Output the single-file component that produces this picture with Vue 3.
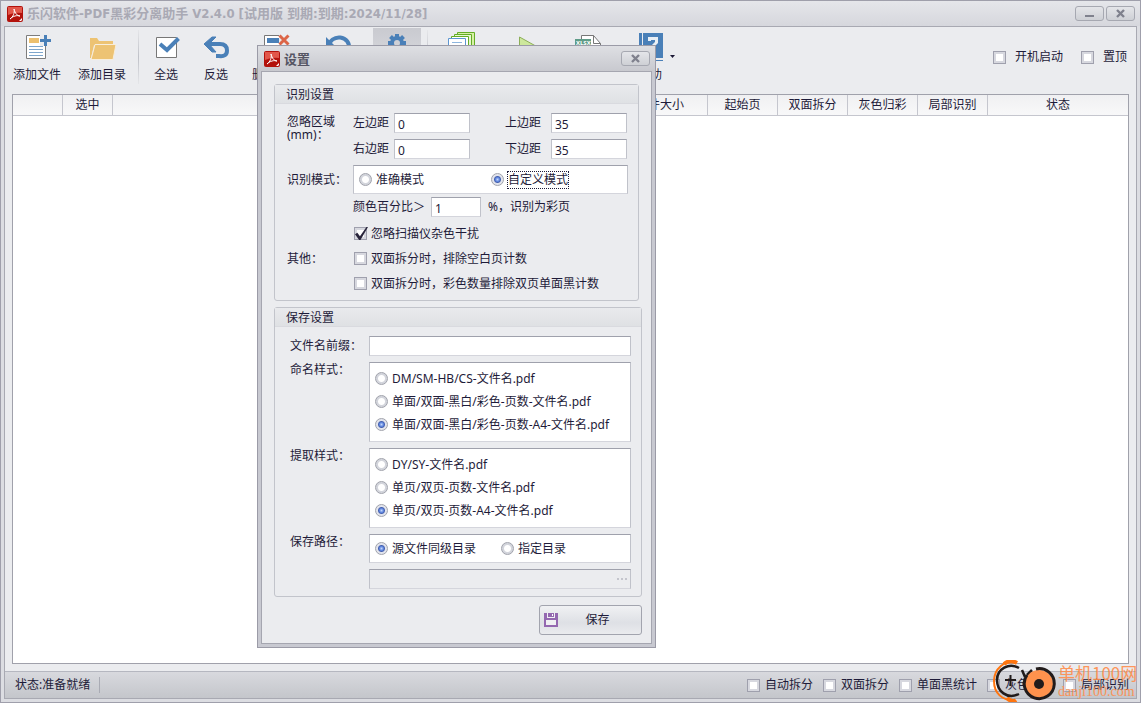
<script setup>
import { ref } from 'vue'

const columns = ['', '选中', '', '文件大小', '起始页', '双面拆分', '灰色归彩', '局部识别', '状态']
const statusOptions = ['自动拆分', '双面拆分', '单面黑统计', '灰色归彩', '局部识别']
const namingStyles = ['DM/SM-HB/CS-文件名.pdf', '单面/双面-黑白/彩色-页数-文件名.pdf', '单面/双面-黑白/彩色-页数-A4-文件名.pdf']
const extractStyles = ['DY/SY-文件名.pdf', '单页/双页-页数-文件名.pdf', '单页/双页-页数-A4-文件名.pdf']

const left = ref('0')
const right = ref('0')
const top = ref('35')
const bottom = ref('35')
const percent = ref('1')
const mode = ref('custom')
const ignoreNoise = ref(true)
const prefix = ref('')
const naming = ref(2)
const extract = ref(2)
const path = ref('same')
</script>

<template>
  <div class="window">
    <header class="titlebar">
      <svg class="logo" viewBox="0 0 16 16" aria-hidden="true">
        <rect width="16" height="16" rx="2" fill="#b3120c" />
        <path d="M1 1h14v6Q8 6 1 9z" fill="#e2574a" />
        <path d="M3 13C6 11 8 7 7 3 8 7 10 10 13 10 10 9 6 10 3 13" fill="none" stroke="#fff" stroke-width="1" />
        <path d="M12 15l3-3v2l-1 1z" fill="#fff" />
      </svg>
      <h1>乐闪软件-PDF黑彩分离助手 V2.4.0 [试用版 到期:到期:2024/11/28]</h1>
      <div class="caption-buttons">
        <button class="caption" aria-label="最小化"><svg viewBox="0 0 11 9"><path d="M1 7h9" stroke="#7f818d" stroke-width="2" /></svg></button>
        <button class="caption" aria-label="关闭"><svg viewBox="0 0 11 9"><path d="M2 1l7 7M9 1L2 8" stroke="#7f818d" stroke-width="2.4" /></svg></button>
      </div>
    </header>

    <div class="client">
      <div class="toolbar">
        <button class="tool wide">
          <svg viewBox="0 0 28 28">
            <path d="M3.500 3.500h19v23h-19z" fill="#fff" stroke="#7d7d7d" />
            <path d="M6 6h10v5H6z" fill="#edc06e" />
            <path d="M6 14.500h14M6 17.500h14M6 20.500h14M6 23.500h14" stroke="#7ea6cc" />
            <path d="M17 3h6v11h-6z" fill="#ebecef" />
            <path d="M17 8.500h11M22.500 3v11" stroke="#4a80b8" stroke-width="3" />
          </svg>
          <span>添加文件</span>
        </button>
        <button class="tool wide">
          <svg viewBox="0 0 28 28">
            <path d="M2 6h7l2 3h14v4H6L3 26H2z" fill="#edc373" />
            <path d="M7 12.500h21l-3 15H3z" fill="#edc373" stroke="#f8eedb" />
          </svg>
          <span>添加目录</span>
        </button>
        <i class="divider"></i>
        <button class="tool">
          <svg viewBox="0 0 28 28">
            <path d="M4.500 5.500h20v20h-20z" fill="#fff" stroke="#777" />
            <path d="M8 12l7 6L26.500 6.500" fill="none" stroke="#4a80b8" stroke-width="4" />
          </svg>
          <span>全选</span>
        </button>
        <button class="tool">
          <svg viewBox="0 0 28 28">
            <path d="M5 12h13q7 0 7 6.500T17 24h-3" fill="none" stroke="#4a80b8" stroke-width="4" />
            <path d="M10 5h4l-7 7 7 8h-4L2 12z" fill="#4a80b8" stroke="#4a80b8" />
          </svg>
          <span>反选</span>
        </button>
        <button class="tool delete">
          <svg viewBox="0 0 28 28">
            <path d="M2.500 3.500h22v20h-22z" fill="#fff" stroke="#777" />
            <path d="M5 6h12v5H5z" fill="#4a80b8" />
            <path d="M17 3h10v11H17z" fill="#ebecef" />
            <path d="M17.500 3.500l9 9M26.500 3.500l-9 9" stroke="#dc6547" stroke-width="3" />
          </svg>
          <span>删除选中</span>
        </button>
        <button class="tool undo" aria-label="撤销">
          <svg viewBox="0 0 28 28">
            <path d="M5 14a10 9 0 1 1 7 9" fill="none" stroke="#4a80b8" stroke-width="4" />
            <path d="M2 5v11h11z" fill="#4a80b8" />
          </svg>
        </button>
        <button class="tool pressed">
          <svg viewBox="0 0 28 28">
            <circle cx="14" cy="11" r="5" fill="none" stroke="#4a80b8" stroke-width="4" />
            <path d="M14 2v4M14 16v4M5 11h4M19 11h4M7.500 4.500l3 3M17.500 14.500l3 3M7.500 17.500l3-3M17.500 7.500l3-3" stroke="#4a80b8" stroke-width="4" />
          </svg>
          <span>设置</span>
        </button>
        <i class="divider short"></i>
        <button class="tool docs" aria-label="批量">
          <svg viewBox="0 0 28 28">
            <path d="M9.500.5h17v17h-17z" fill="#d7f0a6" stroke="#64ad26" />
            <path d="M6.500 2.500h17v17h-17z" fill="#e8f7d1" stroke="#64ad26" />
            <path d="M3.500 4.500h17v18h-17z" fill="#fff" stroke="#64ad26" />
            <path d="M.5 6.500h17v18H.5z" fill="#fff" stroke="#5d96d2" />
            <path d="M4 10.500h10M4 13.500h10M4 16.500h10" stroke="#8db6df" />
          </svg>
        </button>
        <button class="tool play" aria-label="开始">
          <svg viewBox="0 0 28 28"><path d="M7.500 5l18 10-18 10z" fill="#cde89c" stroke="#8cae58" stroke-width="1" /></svg>
        </button>
        <button class="tool sheet" aria-label="导出">
          <svg viewBox="0 0 28 28">
            <path d="M7.500 3.500h12l7 8v14h-19z" fill="#fff" stroke="#777" />
            <path d="M19.500 3.500v8h7" fill="none" stroke="#777" />
            <path d="M1 7h16v7H1z" fill="#5f9c88" />
            <text x="2" y="13" fill="#fff" font-size="6" font-weight="700">XLSX</text>
          </svg>
        </button>
        <button class="tool help">
          <svg viewBox="0 0 28 28">
            <path d="M3 1h3v26H3zM7 1h20v25H7zM3 28h24v1H3z" fill="#4a80b8" />
            <path d="M3 27.500h24" stroke="#ebecef" />
            <path d="M13.500 9V6.500h7v4l-4 4v3M16.500 20v3" fill="none" stroke="#e9eff5" stroke-width="3" />
          </svg>
          <span>帮助</span>
        </button>
        <button class="drop" aria-label="更多"><svg viewBox="0 0 5 3"><path d="M0 0h5L2.500 3z" fill="#1b1835" /></svg></button>
        <div class="top-options">
          <label><input type="checkbox">开机启动</label>
          <label><input type="checkbox">置顶</label>
        </div>
      </div>

      <div class="list">
        <table>
          <colgroup><col class="c50"><col class="c50"><col><col class="c95"><col class="c70"><col class="c70"><col class="c70"><col class="c70"><col class="c140"></colgroup>
          <thead><tr><th v-for="(c, i) in columns" :key="i">{{ c }}</th></tr></thead>
        </table>
      </div>

      <footer class="status">
        <span class="state">状态:准备就绪</span>
        <div class="status-options">
          <label v-for="s in statusOptions" :key="s"><input type="checkbox">{{ s }}</label>
        </div>
      </footer>
    </div>

    <section class="dialog" role="dialog" aria-labelledby="dialog-title">
      <header class="dialog-title">
        <svg class="logo" viewBox="0 0 16 16" aria-hidden="true">
          <rect width="16" height="16" rx="2" fill="#b3120c" />
          <path d="M1 1h14v6Q8 6 1 9z" fill="#e2574a" />
          <path d="M3 13C6 11 8 7 7 3 8 7 10 10 13 10 10 9 6 10 3 13" fill="none" stroke="#fff" stroke-width="1" />
          <path d="M12 15l3-3v2l-1 1z" fill="#fff" />
        </svg>
        <h2 id="dialog-title">设置</h2>
        <button class="caption" aria-label="关闭设置"><svg viewBox="0 0 11 9"><path d="M2 1l7 7M9 1L2 8" stroke="#7f818d" stroke-width="2.4" /></svg></button>
      </header>
      <form class="dialog-body" @submit.prevent>
        <section class="group detect">
          <h3>识别设置</h3>
          <div class="rows">
            <div class="row">
              <span class="name area">忽略区域<br>(mm)：</span>
              <div class="margins">
                <label for="m-left">左边距</label><input id="m-left" v-model="left" type="text">
                <label for="m-top" class="second">上边距</label><input id="m-top" v-model="top" type="text">
                <label for="m-right">右边距</label><input id="m-right" v-model="right" type="text">
                <label for="m-bottom" class="second">下边距</label><input id="m-bottom" v-model="bottom" type="text">
              </div>
            </div>
            <div class="row mode">
              <span class="name">识别模式：</span>
              <div class="box inline">
                <label><input v-model="mode" type="radio" name="mode" value="exact">准确模式</label>
                <label><input v-model="mode" type="radio" name="mode" value="custom"><span class="focus">自定义模式</span></label>
              </div>
            </div>
            <div class="percent">
              <label for="percent">颜色百分比＞</label>
              <input id="percent" v-model="percent" type="text">
              <span>%，识别为彩页</span>
            </div>
            <div class="row others">
              <span class="name">其他：</span>
              <div class="checks">
                <label><input v-model="ignoreNoise" type="checkbox">忽略扫描仪杂色干扰</label>
                <label><input type="checkbox">双面拆分时，排除空白页计数</label>
                <label><input type="checkbox">双面拆分时，彩色数量排除双页单面黑计数</label>
              </div>
            </div>
          </div>
        </section>

        <section class="group saving">
          <h3>保存设置</h3>
          <div class="rows">
            <div class="row prefix">
              <label class="name" for="prefix">文件名前缀：</label>
              <input id="prefix" v-model="prefix" type="text">
            </div>
            <div class="row">
              <span class="name">命名样式：</span>
              <div class="box stack">
                <label v-for="(n, i) in namingStyles" :key="n"><input v-model="naming" type="radio" name="naming" :value="i">{{ n }}</label>
              </div>
            </div>
            <div class="row">
              <span class="name">提取样式：</span>
              <div class="box stack">
                <label v-for="(n, i) in extractStyles" :key="n"><input v-model="extract" type="radio" name="extract" :value="i">{{ n }}</label>
              </div>
            </div>
            <div class="row">
              <span class="name">保存路径：</span>
              <div class="box inline">
                <label><input v-model="path" type="radio" name="path" value="same">源文件同级目录</label>
                <label><input v-model="path" type="radio" name="path" value="chosen">指定目录</label>
              </div>
            </div>
            <div class="row">
              <span></span>
              <div class="picker">
                <input type="text" disabled aria-label="指定目录">
                <button type="button" disabled aria-label="浏览"><i></i><i></i><i></i></button>
              </div>
            </div>
          </div>
        </section>

        <button class="save">
          <svg viewBox="0 0 14 14"><path d="M0 0h14v14H0z" fill="#9468b0" /><path d="M3 0h8v5H3zM2 7h10v5H2z" fill="#f0f0f3" /><path d="M4 0h6v4H4z" fill="#9468b0" /><path d="M8 1h1v2H8z" fill="#fff" /></svg>
          <span>保存</span>
        </button>
      </form>
    </section>

    <div class="watermark">
      <svg viewBox="0 0 64 42" aria-hidden="true">
        <path d="M24 3C13-1 2 9 2 21s8 20 21 19" fill="none" stroke="#ff750f" stroke-width="2" />
        <path d="M12 4q6-5 13-1M15 38q5 5 9 2" fill="none" stroke="#ff750f" stroke-width="4" />
        <path d="M27 8C17 2 5 9 5 20s10 20 22 14" fill="none" stroke="#211b1b" stroke-width="2.5" />
        <path d="M13 20h11M18.500 15v11" stroke="#211b1b" stroke-width="2" />
        <path d="M30 10l3 7M40 10l-5 5" stroke="#211b1b" stroke-width="2.5" />
        <circle cx="47" cy="24" r="14" fill="#ff924d" />
        <path d="M44 9a15 15 0 1 1-9 6" fill="none" stroke="#211b1b" stroke-width="3" />
        <circle cx="47" cy="24" r="5" fill="#211b1b" />
      </svg>
      <div class="mark-text"><span>单机100网</span><small>danji100.com</small></div>
    </div>
  </div>
</template>

<style>
body { margin: 0; }
</style>

<style scoped>
* { box-sizing: border-box; }
.window {
  position: relative;
  display: flex;
  flex-direction: column;
  min-height: 100vh;
  padding: 0 3px 3px;
  border: 1px solid #9f9fab;
  background: #dcdde2;
  color: #1e1b39;
  font: 12px/16px "Noto Sans", "Noto Sans CJK SC", sans-serif;
  overflow: hidden;
}
button, input { font: inherit; color: inherit; margin: 0; }
button { padding: 0; }
svg { display: block; flex: none; }
label { display: flex; align-items: center; white-space: nowrap; }
.logo { width: 16px; height: 16px; }
.titlebar {
  display: flex;
  align-items: center;
  gap: 4px;
  height: 25px;
  margin: 0 -3px;
  padding: 0 5px 0 6px;
  background: linear-gradient(#e5e6ea, #d6d7dd);
}
h1 {
  flex: 1;
  margin: 0;
  color: #a9a9b4;
  font: 700 13px/18px "DejaVu Sans Condensed", "Noto Sans CJK SC", sans-serif;
  white-space: nowrap;
}
.caption-buttons { display: flex; gap: 2px; }
.caption {
  display: flex;
  align-items: center;
  justify-content: center;
  width: 29px;
  height: 15px;
  border: 1px solid #a6a8b1;
  border-radius: 3px;
  background: linear-gradient(#e4e5e9, #ced0d5);
}
.caption svg { width: 11px; height: 9px; }
.client {
  flex: 1;
  display: flex;
  flex-direction: column;
  border: 1px solid #a8a9b2;
  background: #ebecef;
}
.toolbar { display: flex; align-items: flex-start; height: 67px; padding-top: 1px; }
.tool {
  display: flex;
  flex-direction: column;
  align-items: center;
  gap: 7px;
  width: 50px;
  height: 61px;
  padding-top: 4px;
  border: 0;
  background: none;
  white-space: nowrap;
}
.tool svg { width: 28px; height: 28px; overflow: visible; }
.tool.wide { width: 65px; padding-right: 1px; }
.divider { width: 1px; height: 54px; margin: 2px 2px 0 3px; background: linear-gradient(#e5e6e9, #bfc1c8, #e5e6e9); }
.delete { width: 70px; }
.undo { width: 54px; }
.pressed { width: 48px; margin-left: 8px; background: linear-gradient(#c9cad0, #e4e5e8); }
.divider.short { margin: 2px 6px 0; }
.docs { width: 56px; }
.play { width: 72px; }
.sheet { width: 52px; }
.help { width: 72px; }
.drop { width: 12px; height: 14px; margin: 21px 0 0 -20px; border: 0; background: none; }
.drop svg { width: 5px; height: 3px; margin: auto; }
.top-options { display: flex; gap: 18px; margin: 21px 9px 0 auto; }
.top-options label { gap: 9px; }
.list { flex: 1; margin: 0 7px 7px; border: 1px solid #a0a1ab; background: #fff; }
table { width: 100%; table-layout: fixed; border-collapse: separate; border-spacing: 0; }
th { height: 21px; padding: 0; border-right: 1px solid #c5c6ce; border-bottom: 1px solid #c5c6ce; background: linear-gradient(#f0f0f2, #f8f8f9); font-weight: 400; line-height: 16px; }
th:last-child { border-right: 0; }
.c50 { width: 50px; }
.c70 { width: 70px; }
.c95 { width: 95px; }
.c140 { width: 140px; }
.status {
  display: flex;
  align-items: center;
  justify-content: space-between;
  height: 27px;
  padding: 0 7px 0 10px;
  border-top: 1px solid #b5b7c0;
  background: linear-gradient(#d8d9de, #c4c6cb);
}
.state { padding-right: 9px; border-right: 1px solid #a9abb4; }
.status-options { display: flex; gap: 10px; }
.status-options label { gap: 5px; }

input[type="checkbox"], input[type="radio"] { appearance: none; flex: none; width: 13px; height: 13px; }
input[type="checkbox"] { position: relative; border: 1px solid #9fa0ad; background: #fff; box-shadow: inset 0 0 0 2px #d7d8df; }
input[type="checkbox"]:checked::after {
  content: "";
  position: absolute;
  inset: -1px -2px -1px 0;
  background: #29253b;
  clip-path: polygon(0 55%, 18% 45%, 38% 72%, 88% 0, 100% 0, 42% 100%, 32% 100%);
}
input[type="radio"] { border: 1px solid #a1a3ac; border-radius: 50%; background: radial-gradient(circle, #fff 0 3px, #d3d5dc 4px); }
input[type="radio"]:checked { background: radial-gradient(circle, #c3d6fa 0, #5f86df 2px, #4762b0 3px, #e2e4ec 4px); }
input[type="text"] {
  min-width: 0;
  height: 20px;
  padding: 2px 3px 0;
  border: 1px solid #c0c2ca;
  border-top-color: #9fa1ac;
  border-bottom-color: #d4d5dc;
  background: #fff;
}

.dialog {
  position: absolute;
  left: 256px;
  top: 44px;
  width: 399px;
  padding: 0 3px 3px;
  border: 1px solid #9b9ba7;
  background: #c8c9d1;
}
.dialog-title { display: flex; align-items: center; gap: 4px; height: 25px; margin: 0 -3px; padding: 0 5px 0 6px; background: linear-gradient(#dedfe3, #c8c9cf); }
h2 { flex: 1; margin: 0; font-size: 13px; line-height: 18px; font-weight: 700; color: #555563; }
.dialog-body { display: flex; flex-direction: column; padding: 12px 9px 8px 12px; border: 1px solid #a5a6b0; background: #ebecef; }
.group { border: 1px solid #c2c4cb; border-radius: 3px; }
.detect { margin: 0 3px 6px 0; }
h3 { height: 19px; margin: 0; padding: 2px 11px 0; border-bottom: 1px solid #d9dadf; background: linear-gradient(#e9eaed, #dfe1e4); font-size: 12px; line-height: 16px; font-weight: 400; }
.rows { display: flex; flex-direction: column; gap: 6px; }
.detect .rows { padding: 9px 10px 4px 12px; }
.saving .rows { padding: 9px 10px 7px 15px; }
.row { display: grid; grid-template-columns: 79px 1fr; align-items: start; }
.detect .row { grid-template-columns: 66px 1fr; }
.row.mode, .row.others, .row.prefix { align-items: center; }
.area { padding-top: 2px; line-height: 13px; }
.margins { display: grid; grid-template-columns: 41px 76px 81px 76px; gap: 6px 0; }
.second { justify-content: flex-end; padding-right: 10px; }
.box { border: 1px solid #c0c2ca; border-top-color: #9fa1ac; border-bottom-color: #d4d5dc; background: #fff; }
.box label, .checks label { gap: 4px; }
.inline { display: grid; grid-template-columns: 126px 1fr; height: 29px; padding-left: 5px; align-items: center; }
.detect .inline { grid-template-columns: 132px 1fr; }
.focus { outline: 1px dotted #1e1b39; }
.stack { height: 80px; padding: 4px 5px; }
.stack label { height: 23px; }
.percent { display: flex; align-items: center; margin: -3px 0 -2px 66px; }
.percent label { width: 78px; }
.percent input { width: 50px; margin-right: 7px; }
.checks label { height: 25px; padding-left: 1px; }
.picker { display: flex; height: 20px; border: 1px solid #c0c2ca; border-top-color: #9fa1ac; border-bottom-color: #d4d5dc; }
.picker input[type="text"] { flex: 1; height: 18px; border: 0; background: none; }
.picker button { display: flex; align-items: center; justify-content: center; gap: 2px; width: 17px; border: 0; background: none; }
.picker i { width: 2px; height: 2px; background: #c4c5cd; }
.save {
  display: flex;
  align-items: center;
  align-self: flex-end;
  width: 103px;
  height: 30px;
  margin-top: 8px;
  padding: 0 4px;
  border: 1px solid #a2a4ae;
  border-radius: 3px;
  background: linear-gradient(#f0f1f3, #dee0e5 60%, #eaebee);
}
.save svg { width: 14px; height: 14px; }
.save span { flex: 1; text-align: center; }

.watermark { position: absolute; right: 2px; bottom: 0; display: flex; gap: 2px; color: #ff8d4c; }
.watermark svg { width: 64px; height: 42px; }
.mark-text { display: flex; flex-direction: column; width: 80px; padding-top: 3px; white-space: nowrap; opacity: .9; }
.mark-text span { font: 17px/20px "Noto Sans CJK SC", sans-serif; }
.mark-text small { font: 14px/18px "Liberation Serif", serif; }
</style>
